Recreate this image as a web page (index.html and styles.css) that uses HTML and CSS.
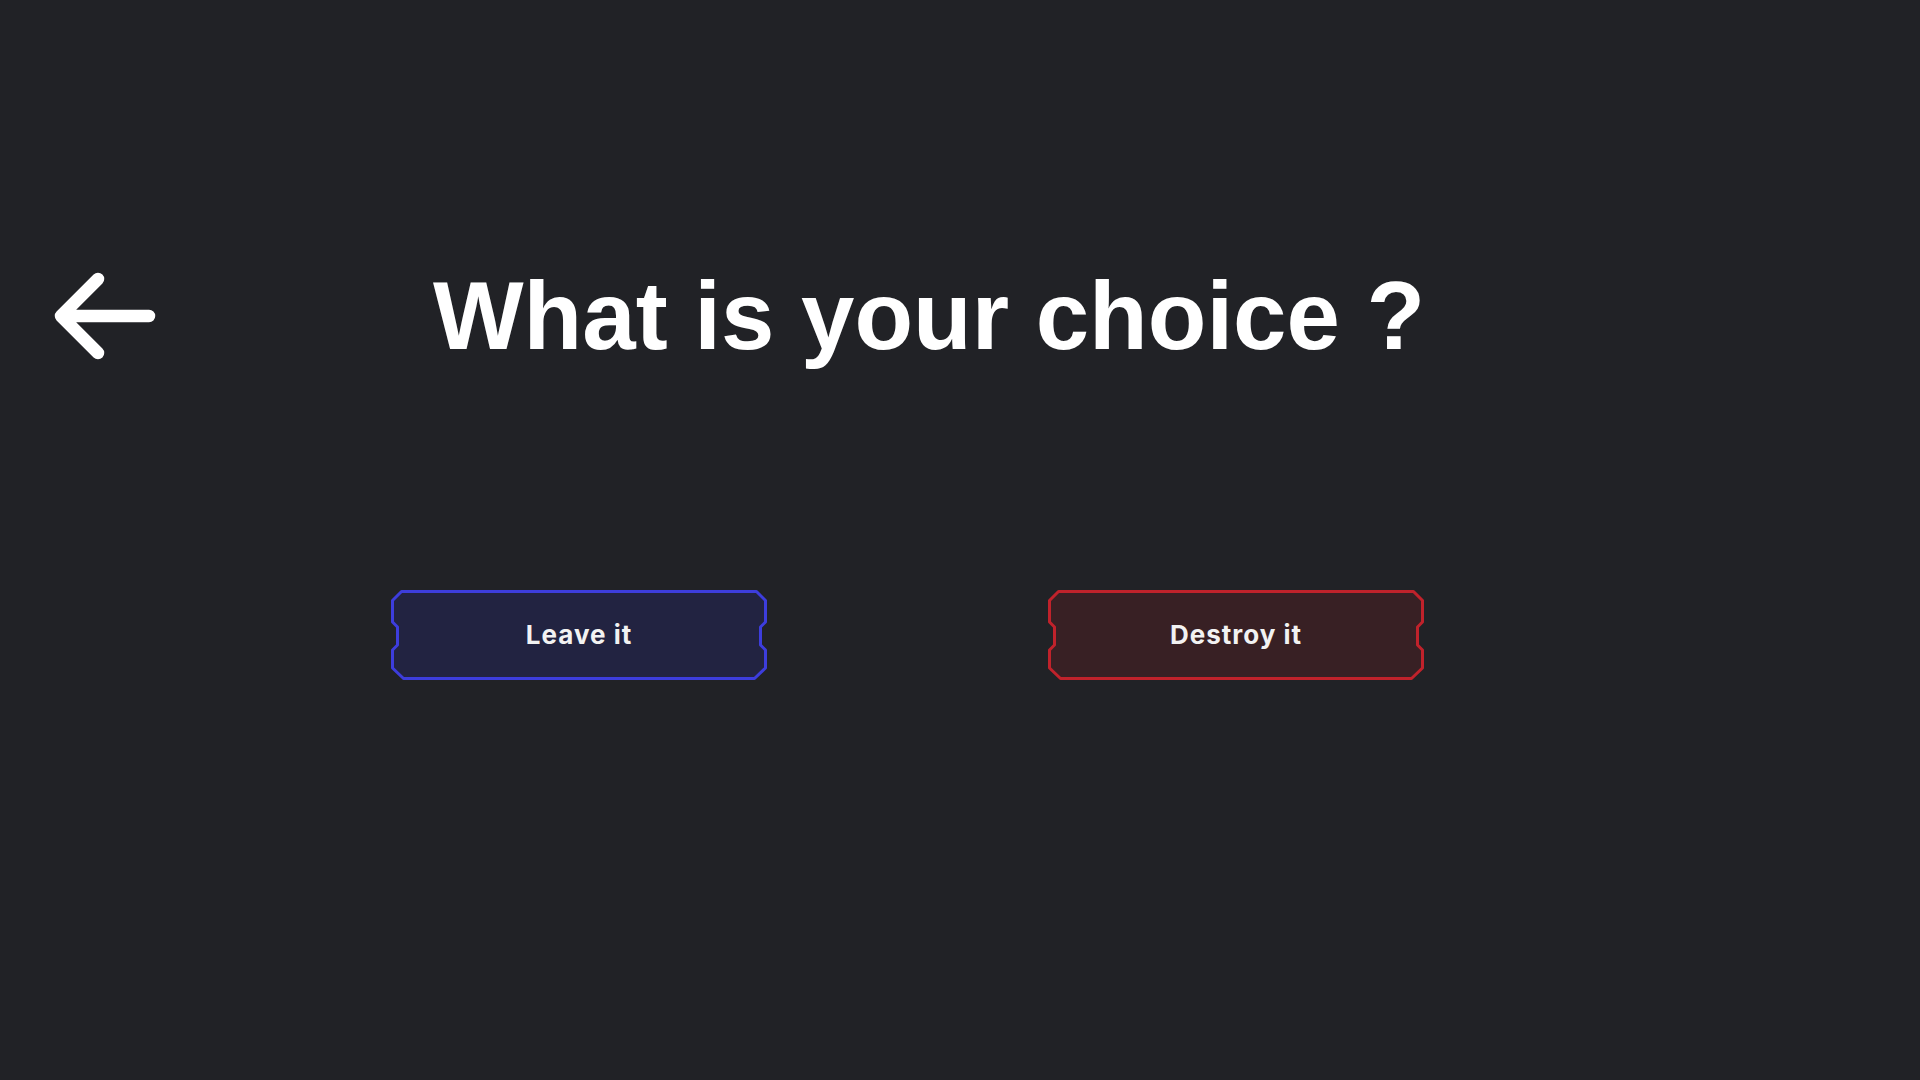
FILE: index.html
```html
<!DOCTYPE html>
<html lang="en">
<head>
<meta charset="utf-8">
<title>What is your choice ?</title>
<link rel="stylesheet" href="styles.css">
</head>
<body>
<main class="page">
  <header class="header">
    <button class="back" aria-label="Back">
      <svg class="back-icon" width="130" height="110" viewBox="0 0 130 110">
        <path d="M58 18 L21 55 L58 92 M21 55 L109 55" fill="none" stroke="#ffffff" stroke-width="12.5" stroke-linecap="round" stroke-linejoin="round"/>
      </svg>
    </button>
    <h1 class="title">What is your choice ?</h1>
  </header>
  <section class="choices">
    <button class="choice choice-blue">
      <svg class="choice-frame" width="376" height="90" viewBox="0 0 376 90">
        <polygon points="10.5,1.5 365.5,1.5 374.5,10.5 374.5,32 369.5,37 369.5,55 374.5,60 374.5,78 363.5,88.5 12.5,88.5 1.5,78 1.5,60 6.5,55 6.5,37 1.5,32 1.5,10.5"/>
      </svg>
      <span class="choice-label">Leave it</span>
    </button>
    <button class="choice choice-red">
      <svg class="choice-frame" width="376" height="90" viewBox="0 0 376 90">
        <polygon points="10.5,1.5 365.5,1.5 374.5,10.5 374.5,32 369.5,37 369.5,55 374.5,60 374.5,78 363.5,88.5 12.5,88.5 1.5,78 1.5,60 6.5,55 6.5,37 1.5,32 1.5,10.5"/>
      </svg>
      <span class="choice-label">Destroy it</span>
    </button>
  </section>
</main>
</body>
</html>
```

FILE: styles.css
```css
html, body {
  margin: 0;
  padding: 0;
  background: #212226;
  width: 1920px;
  height: 1080px;
  overflow: hidden;
}

.page {
  padding-top: 261px;
  display: flex;
  flex-direction: column;
}

.header {
  display: flex;
  align-items: center;
  height: 110px;
  padding-left: 40px;
}

.back {
  background: none;
  border: 0;
  padding: 0;
  margin: 0;
  width: 130px;
  height: 110px;
  cursor: pointer;
  display: block;
}

.back-icon {
  display: block;
}

.title {
  margin: 0 0 0 263px;
  font-family: "Liberation Sans", Arial, sans-serif;
  font-weight: 700;
  font-size: 96px;
  line-height: 110px;
  color: #ffffff;
  white-space: nowrap;
}

.choices {
  display: flex;
  gap: 281px;
  padding-left: 391px;
  margin-top: 219px;
}

.choice {
  position: relative;
  width: 376px;
  height: 90px;
  padding: 0;
  margin: 0;
  border: 0;
  background: none;
  display: flex;
  align-items: center;
  justify-content: center;
  cursor: pointer;
}

.choice-frame {
  position: absolute;
  left: 0;
  top: 0;
}

.choice-frame polygon {
  stroke-width: 3;
  stroke-linejoin: round;
}

.choice-blue .choice-frame polygon {
  fill: #222341;
  stroke: #3d3ddc;
}

.choice-red .choice-frame polygon {
  fill: #382024;
  stroke: #c0222b;
}

.choice-label {
  position: relative;
  font-family: "Inter", "Open Sans", sans-serif;
  font-weight: 700;
  font-size: 26px;
  letter-spacing: 1px;
  color: #f2f2f2;
  line-height: 1;
}
```
